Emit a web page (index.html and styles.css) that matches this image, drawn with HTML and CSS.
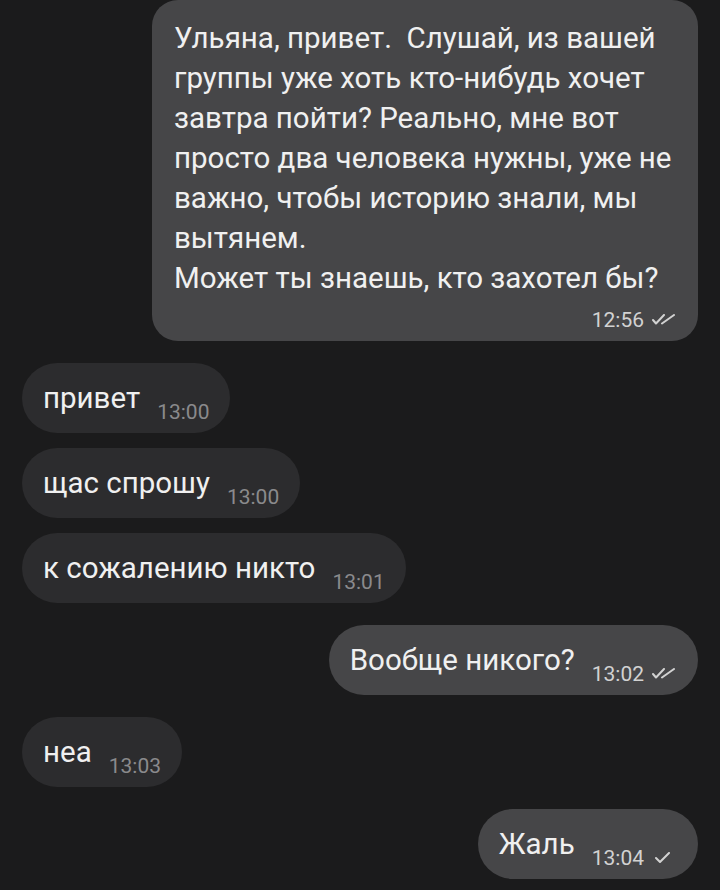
FILE: index.html
```html
<!DOCTYPE html>
<html lang="ru">
<head>
    <meta charset="UTF-8">
    <meta name="viewport" content="width=device-width, initial-scale=1.0">
    <title>Чат</title>
    <link rel="stylesheet" href="styles.css">
</head>
<body>
    <div class="chat">
        <div class="msg out long">
            <p class="text">Ульяна, привет.&nbsp; Слушай, из вашей<br>группы уже хоть кто-нибудь хочет<br>завтра пойти? Реально, мне вот<br>просто два человека нужны, уже не<br>важно, чтобы историю знали, мы<br>вытянем.<br>Может ты знаешь, кто захотел бы?</p>
            <div class="meta">
                <span class="time">12:56</span>
                <svg class="ticks" width="26" height="12" viewBox="0 0 26 12"><path d="M2 6 L5 9.5 L13 1 M11 9.5 L23 1" /></svg>
            </div>
        </div>

        <div class="msg in first">
            <span class="text">привет</span>
            <span class="time">13:00</span>
        </div>
        <div class="msg in">
            <span class="text">щас спрошу</span>
            <span class="time">13:00</span>
        </div>
        <div class="msg in">
            <span class="text">к сожалению никто</span>
            <span class="time">13:01</span>
        </div>

        <div class="msg out first">
            <span class="text">Вообще никого?</span>
            <span class="meta">
                <span class="time">13:02</span>
                <svg class="ticks" width="26" height="12" viewBox="0 0 26 12"><path d="M2 6 L5 9.5 L13 1 M11 9.5 L23 1" /></svg>
            </span>
        </div>

        <div class="msg in first">
            <span class="text">неа</span>
            <span class="time">13:03</span>
        </div>

        <div class="msg out first">
            <span class="text">Жаль</span>
            <span class="meta">
                <span class="time">13:04</span>
                <svg class="ticks" width="26" height="12" viewBox="0 0 26 12"><path d="M5 6 L9 10 L18 1" /></svg>
            </span>
        </div>
    </div>
</body>
</html>
```

FILE: styles.css
```css
body {
    margin: 0;
    background-color: #1b1b1c;
    font-family: Roboto, "Noto Sans", sans-serif;
    color: #f0f0f0;
}
.chat {
    display: flex;
    flex-direction: column;
    gap: 15px;
    padding: 0 22px;
}
.msg {
    display: flex;
    align-items: flex-end;
    padding: 15px 21px;
    border-radius: 35px;
    max-width: 546px;
    box-sizing: border-box;
}
.msg.first {
    margin-top: 7px;
}
.msg.in {
    align-self: flex-start;
    background-color: #2c2c2e;
}
.msg.out {
    align-self: flex-end;
    background-color: #464648;
}
.text {
    margin: 0;
    font-size: 29.5px;
    line-height: 40px;
}
.time {
    font-size: 21px;
    line-height: 20px;
    color: #8a8a8c;
}
.msg > .time,
.msg > .meta {
    margin-left: 17px;
    margin-bottom: -4px;
}
.meta {
    display: flex;
    align-items: center;
    gap: 7px;
}
.msg.out .time {
    color: #d2d2d2;
}
.ticks {
    fill: none;
    stroke: #d2d2d2;
    stroke-width: 2;
    stroke-linecap: round;
    stroke-linejoin: round;
}

/* long message: time under the text */
.msg.long {
    display: block;
    width: 546px;
    padding: 18px 21px 15px 22px;
    border-radius: 26px;
}
.msg.long .meta {
    justify-content: flex-end;
    margin-top: 12px;
}
```
